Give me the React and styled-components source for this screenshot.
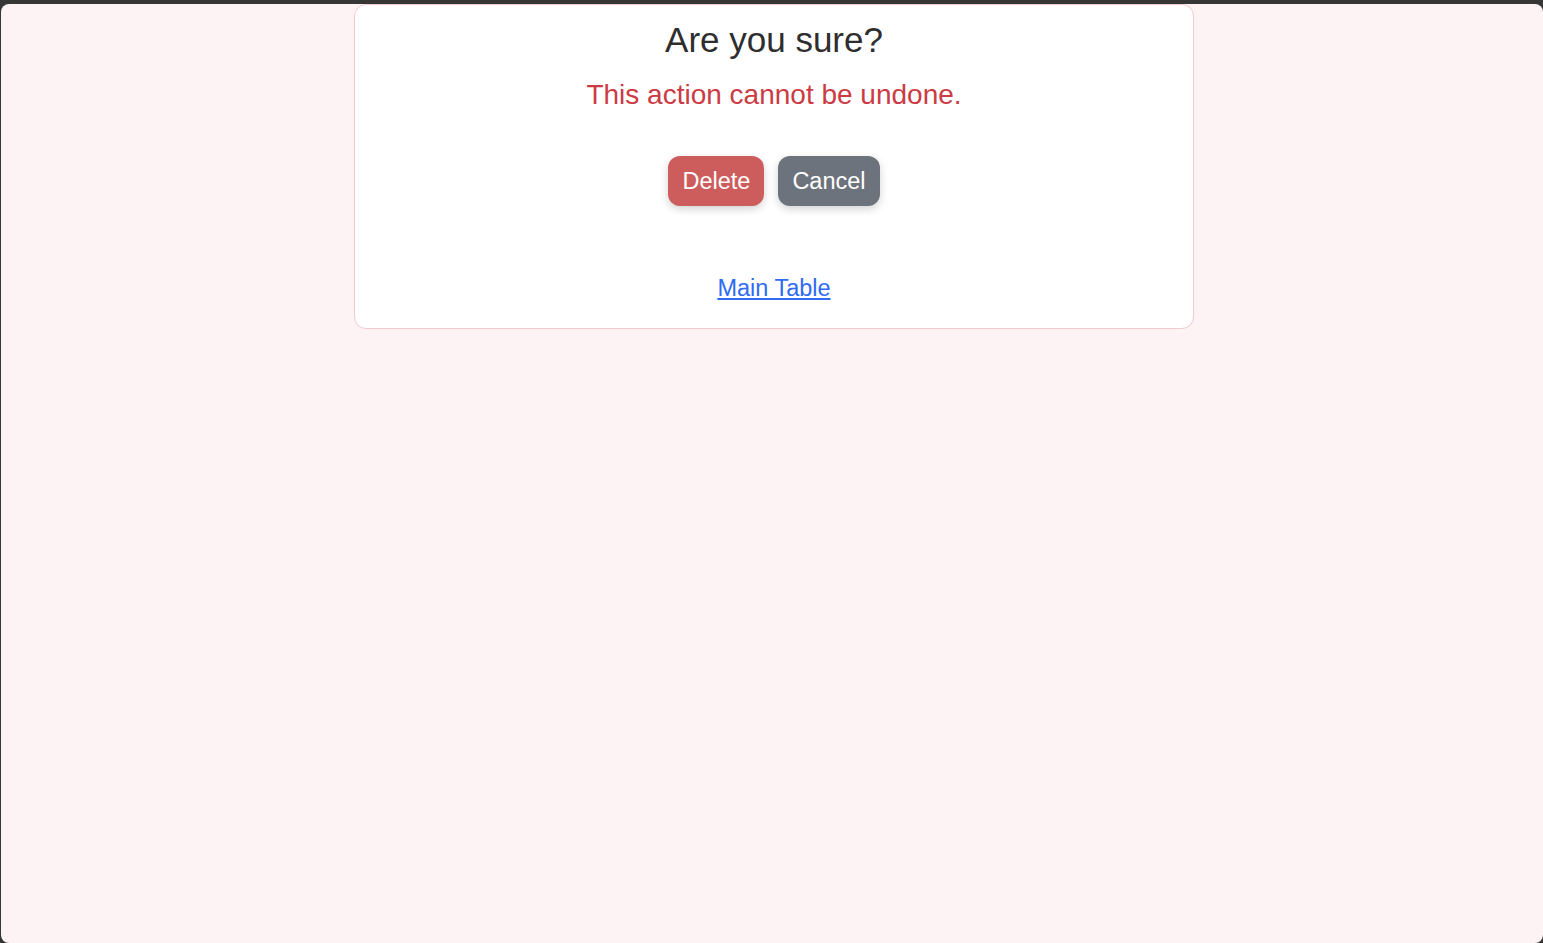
import React from 'react'
import styled, { createGlobalStyle } from 'styled-components'

const GlobalStyle = createGlobalStyle`
    html, body {
        margin: 0;
        padding: 0;
        background: #363636;
        font-family: "Liberation Sans", Arial, sans-serif;
        overflow: hidden;
    }
`;

// the browser window itself (dark frame round it)
const Window = styled.div`
    margin: 4px 0 0 1px;
    width: 1542px;
    height: 939px;
    box-sizing: border-box;
    padding-left: 4px;
    border-radius: 8px;
    background: #fdf3f4;
    overflow: hidden;
`;

const Card = styled.div`
    width: 840px;
    box-sizing: border-box;
    margin: 0 auto;
    padding: 15px 20px 26px;
    background: #fff;
    border: 1px solid #f2c9ce;
    border-radius: 12px;
    display: flex;
    flex-direction: column;
    align-items: center;
    text-align: center;
`;

const Title = styled.h2`
    margin: 0;
    font-size: 35px;
    font-weight: 400;
    color: #2e2e2e;
`;

const Warning = styled.p`
    margin: 19px 0 0;
    font-size: 28px;
    color: #cc3b44;
`;

const Actions = styled.div`
    display: flex;
    gap: 14px;
    margin-top: 45px;
`;

const Button = styled.button`
    height: 50px;
    padding: 0 14px;
    border: none;
    border-radius: 12px;
    font-family: inherit;
    font-size: 23.5px;
    color: #fff;
    background: ${p => p.$variant === 'danger' ? '#cd5c5c' : '#6c737c'};
    box-shadow: 0 3px 8px rgba(0, 0, 0, 0.18);
    cursor: pointer;
`;

const Link = styled.a`
    margin-top: 69px;
    font-size: 23.5px;
    color: #2f6bf3;
    text-decoration: underline;
`;

const App = () => {
    return (
        <>
            <GlobalStyle />
            <Window>
                <Card>
                    <Title>Are you sure?</Title>
                    <Warning>This action cannot be undone.</Warning>
                    <Actions>
                        <Button $variant="danger">Delete</Button>
                        <Button>Cancel</Button>
                    </Actions>
                    <Link href="#">Main Table</Link>
                </Card>
            </Window>
        </>
    )
};

export default App;
